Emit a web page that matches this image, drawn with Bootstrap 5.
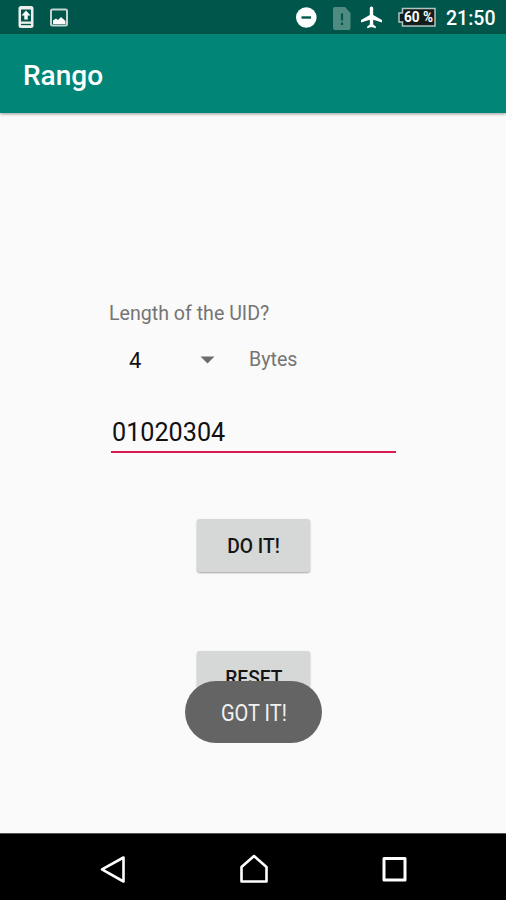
<!DOCTYPE html>
<html lang="en">
<head>
<meta charset="utf-8">
<meta name="viewport" content="width=device-width, initial-scale=1">
<title>Rango</title>
<link href="https://cdn.jsdelivr.net/npm/bootstrap@5.3.0/dist/css/bootstrap.min.css" rel="stylesheet">
<style>
body{font-family:Roboto,sans-serif;background:#fafafa;height:900px;overflow:hidden;color:#111}
svg{display:block;flex:none}
.status-strip{height:34px;background:#00564a;color:#fff;padding-left:16px;padding-right:11px}
.clock{font-size:19.5px;font-weight:500;line-height:34px;width:49px;margin-left:10px;padding-top:3px;white-space:nowrap}
.app-bar{height:79px;background:#008577;padding:5px 0 0 23px;box-shadow:0 1px 3px rgba(0,0,0,.4)}
.app-title{font-size:28px;font-weight:500;color:#fff;line-height:1}
.screen{padding-top:189px}
.form-area{margin-left:109px;width:287px}
.hint{font-size:19.6px;line-height:24px;color:#757575;white-space:nowrap}
.spinner-row{height:24px;margin-top:22px}
.spinner-value{font-size:22px;width:71px;margin-left:20px;padding-top:1px}
.spinner-unit{margin-left:34px}
.uid-input{font-size:25.2px;line-height:36px;height:43px;margin:38px 0 0 2px;width:285px;padding:4px 0 0 1px;border:0;border-bottom:2px solid #d81b4f;border-radius:0;background:none;color:#111;outline:0}
.raised{width:113px;height:53px;border:0;border-radius:3px;background:#d6d8d7;color:#151515;font-size:19.4px;font-weight:500;line-height:53px;padding:1px 0 0;box-shadow:0 1px 2px rgba(0,0,0,.35)}
.raised span{display:inline-block;transform:scaleX(.99)}
.first-action{margin:66px 0 0 197px}
.second-action{margin:79px 0 0 197px}
.toast-pill{left:185px;top:681px;width:137px;height:62px;border-radius:31px;background:#646464;color:#f2f2f2;font-size:23px;line-height:65px}
.toast-pill span{display:inline-block;transform:scaleX(.87)}
.nav-strip{height:67px;background:#000;border-top:1px solid #555;padding:3px 96px 0 97px}
</style>
</head>
<body class="d-flex flex-column position-relative">
<div class="status-strip d-flex align-items-center">
<svg width="54" height="34" viewBox="16 0 54 34"><rect x="18.500" y="6" width="15" height="22" rx="2.500" fill="#eee"/><path d="M21 9.500h10v12H21z" fill="#00564a"/><path d="M26 10.500l4.500 5h-2.800v4h-3.400v-4h-2.800z" fill="#fff"/><path d="M21 24.500h10" stroke="#00564a" stroke-width="1.300"/><rect x="51" y="9.500" width="16" height="16" rx="1.500" fill="none" stroke="#c3d5d1" stroke-width="2"/><path d="M53 24v-3.500l3-2 2 1.500 3-3 4.500 4V24z" fill="#fff"/></svg>
<svg class="ms-auto" width="142" height="34" viewBox="294 0 142 34"><circle cx="306.300" cy="17.500" r="10.300" fill="#fff"/><path d="M301.500 17.500h9.600" stroke="#00564a" stroke-width="2.400"/><path d="M335 7h10l5.500 6v15q0 2-2 2H335q-2 0-2-2V9q0-2 2-2z" fill="#508b81"/><path d="M342 13.500v7m0 2v2.500" stroke="#00564a" stroke-width="2.200"/><path d="M371.500 6.500c1 0 1.700.8 1.700 1.800v6.700l8.800 5v2.500l-8.800-2.700v4.700l2.600 2v1.700l-4.300-1.200-4.300 1.200v-1.700l2.600-2v-4.700l-8.800 2.700V20l8.800-5V8.300c0-1 .7-1.800 1.700-1.800z" fill="#fff"/><path d="M402.500 8.500h32.500v17.500h-32.500v-4H399v-9h3.500z" fill="#111d1a" stroke="#b2c5c1" stroke-width="1.500"/><text x="418.500" y="22.200" text-anchor="middle" font-family="Roboto" font-size="14.500" font-weight="700" fill="#fff" textLength="29" lengthAdjust="spacingAndGlyphs">60 %</text></svg>
<div class="clock">21:50</div>
</div>
<header class="app-bar d-flex align-items-center position-relative"><h1 class="app-title mb-0">Rango</h1></header>
<main class="screen flex-grow-1">
<div class="form-area">
<div class="hint">Length of the UID?</div>
<div class="spinner-row d-flex align-items-center"><div class="spinner-value">4</div>
<svg width="15" height="8" viewBox="0 0 15 8"><path d="M.5.500h14l-7 7z" fill="#6c6c6c"/></svg>
<div class="hint spinner-unit">Bytes</div></div>
<input class="uid-input d-block" value="01020304" aria-label="UID">
</div>
<button class="btn raised d-block first-action"><span>DO IT!</span></button>
<button class="btn raised d-block second-action"><span>RESET</span></button>
</main>
<div class="toast-pill position-absolute text-center" role="status"><span>GOT IT!</span></div>
<nav class="nav-strip d-flex align-items-center justify-content-between">
<svg width="32" height="32" viewBox="97 853 32 32" fill="none" stroke="#fff" stroke-width="2.600" stroke-linejoin="round"><path d="M123.500 857.500v24L102 869.300z"/></svg>
<svg width="32" height="32" viewBox="238 853 32 32" fill="none" stroke="#fff" stroke-width="2.600" stroke-linejoin="round"><path d="M241.500 881.500V867l12.500-11 12.500 11v14.500z"/></svg>
<svg width="32" height="32" viewBox="378 853 32 32" fill="none" stroke="#fff" stroke-width="3" stroke-linejoin="round"><path d="M384 858.500h21v21.500h-21z"/></svg>
</nav>
<script src="https://cdn.jsdelivr.net/npm/bootstrap@5.3.0/dist/js/bootstrap.bundle.min.js"></script>
</body>
</html>
